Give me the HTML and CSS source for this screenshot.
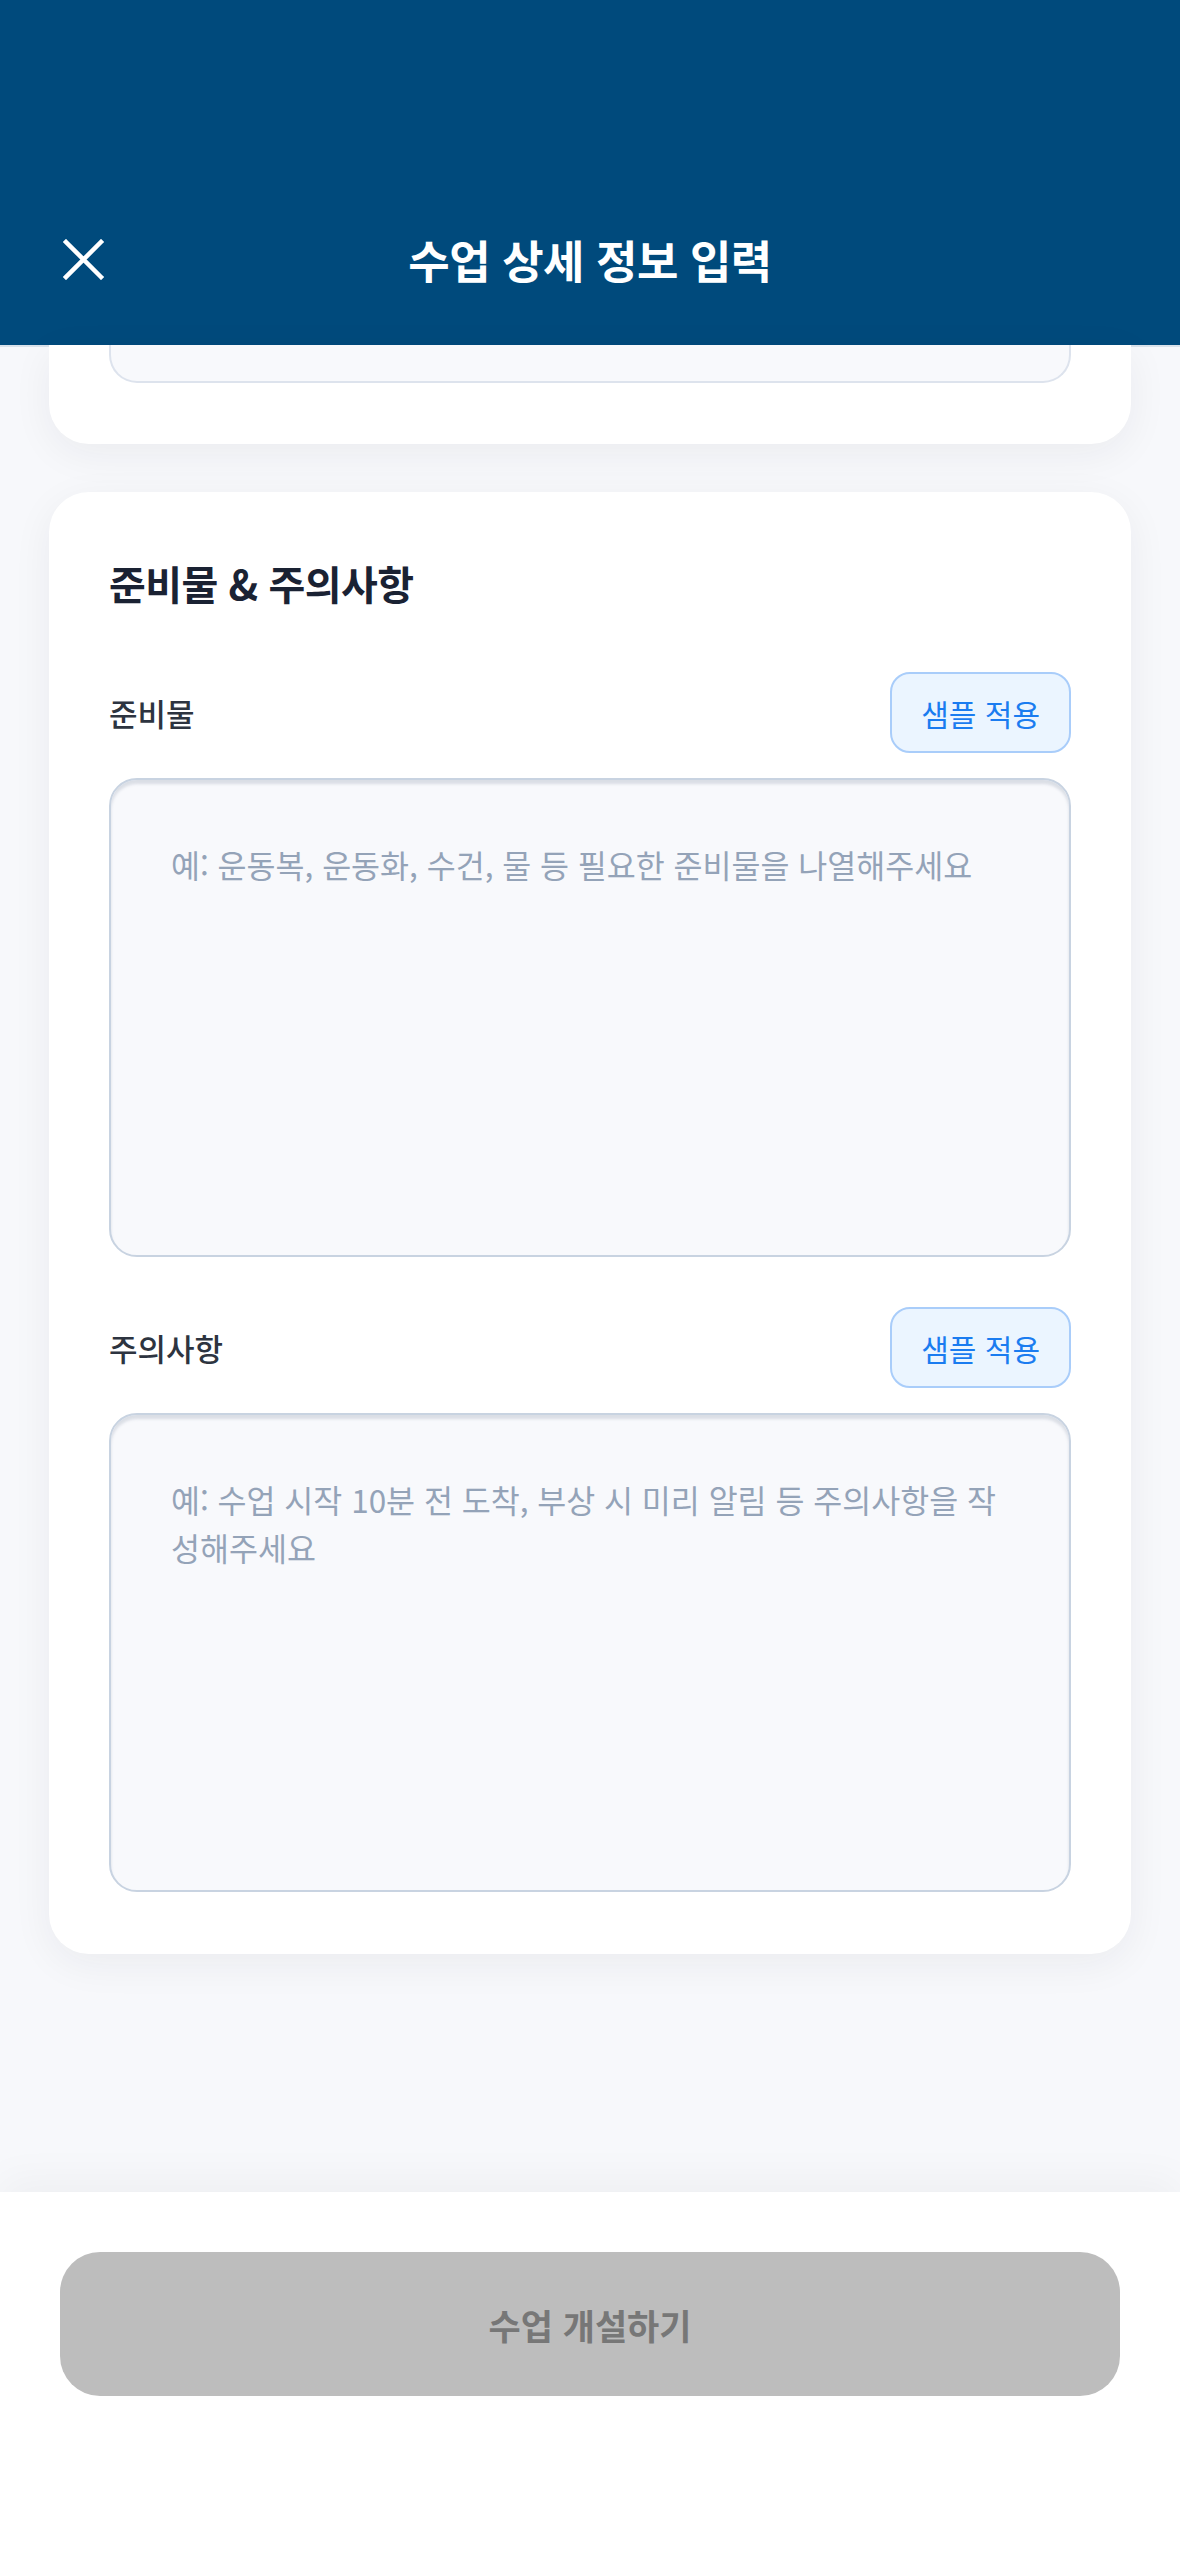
FILE: index.html
```html
<!DOCTYPE html>
<html lang="ko">
<head>
    <meta charset="UTF-8">
    <meta name="viewport" content="width=device-width, initial-scale=1.0">
    <title>수업 상세 정보 입력</title>
    <link rel="stylesheet" href="styles.css">
</head>
<body>
    <header class="topbar">
        <div class="topbar-row">
            <button class="close-btn" aria-label="닫기">
                <svg viewBox="0 0 41 41" width="41" height="41">
                    <path d="M3 3 L38 38 M38 3 L3 38" stroke="#fff" stroke-width="4.5" stroke-linecap="square" fill="none"/>
                </svg>
            </button>
            <h1>수업 상세 정보 입력</h1>
            <span></span>
        </div>
    </header>

    <main class="content">
        <!-- previous section, scrolled under the header -->
        <section class="card card-tail">
            <div class="field-tail"></div>
        </section>

        <section class="card">
            <h2 class="card-title">준비물 &amp; 주의사항</h2>

            <div class="field-head">
                <label for="supplies">준비물</label>
                <button class="sample-btn">샘플 적용</button>
            </div>
            <textarea id="supplies" placeholder="예: 운동복, 운동화, 수건, 물 등 필요한 준비물을 나열해주세요"></textarea>

            <div class="field-head field-gap">
                <label for="notice">주의사항</label>
                <button class="sample-btn">샘플 적용</button>
            </div>
            <textarea id="notice" placeholder="예: 수업 시작 10분 전 도착, 부상 시 미리 알림 등 주의사항을 작&#10;성해주세요"></textarea>
        </section>
    </main>

    <footer class="bottom-bar">
        <button class="submit-btn" disabled>수업 개설하기</button>
    </footer>
</body>
</html>
```

FILE: styles.css
```css
/* General Styling */
body {
    font-family: "Noto Sans CJK KR", "Noto Sans", sans-serif;
    margin: 0;
    padding: 0;
    background-color: #f7f8fb;
    color: #1e293b;
    min-height: 100vh;
    display: flex;
    flex-direction: column;
}

button {
    font-family: inherit;
    cursor: pointer;
}

/* Header */
.topbar {
    background-color: #004a7c;
    padding: 209px 0 36px;
    box-shadow: 0 2px 0 rgba(0, 74, 124, 0.12);
}

.topbar-row {
    display: grid;
    grid-template-columns: 1fr auto 1fr;
    align-items: center;
    height: 100px;
    padding: 0 63px;
}

.close-btn {
    width: 41px;
    height: 41px;
    padding: 0;
    border: none;
    background: none;
    display: flex;
}

.topbar h1 {
    margin: 0;
    color: #fff;
    font-size: 45px;
    font-weight: 700;
    letter-spacing: -0.5px;
}

/* Content */
.content {
    flex: 1;
    padding: 0 49px;
}

.card {
    background-color: #fff;
    border-radius: 40px;
    padding: 60px 60px 62px;
    box-shadow: 0 10px 40px rgba(30, 41, 59, 0.06);
}

.card-tail {
    border-radius: 0 0 40px 40px;
    padding: 0 60px 61px;
    margin-bottom: 48px;
}

.field-tail {
    height: 36px;
    background-color: #f8f9fc;
    border: 2px solid #dde3ed;
    border-top: none;
    border-radius: 0 0 28px 28px;
}

.card-title {
    margin: 0 0 58px;
    font-size: 40px;
    line-height: 62px;
    font-weight: 700;
    color: #1a2233;
    letter-spacing: -0.5px;
}

.field-head {
    display: flex;
    justify-content: space-between;
    align-items: center;
    margin-bottom: 25px;
}

.field-gap {
    margin-top: 50px;
}

.field-head label {
    font-size: 31px;
    font-weight: 500;
    color: #2d3440;
}

.sample-btn {
    height: 81px;
    padding: 0 29px;
    border: 2px solid #a9cdfa;
    border-radius: 20px;
    background-color: #ebf5ff;
    color: #1a7cf0;
    font-size: 30px;
}

textarea {
    display: block;
    width: 100%;
    height: 479px;
    box-sizing: border-box;
    padding: 60px;
    border: 2px solid #c8d3e1;
    border-radius: 28px;
    background-color: #f8f9fc;
    box-shadow: inset 0 4px 3px rgba(100, 116, 139, 0.2);
    font-family: inherit;
    font-size: 31.5px;
    line-height: 48px;
    color: #1e293b;
    resize: none;
    outline: none;
}

textarea::placeholder {
    color: #94a3b8;
}

/* Bottom bar */
.bottom-bar {
    background-color: #fff;
    padding: 60px 60px 162px;
    box-shadow: 0 -12px 40px rgba(0, 0, 0, 0.04);
}

.submit-btn {
    width: 100%;
    height: 144px;
    border: none;
    border-radius: 40px;
    background-color: #bdbdbd;
    color: #777;
    font-size: 35px;
    font-weight: 700;
}
```
